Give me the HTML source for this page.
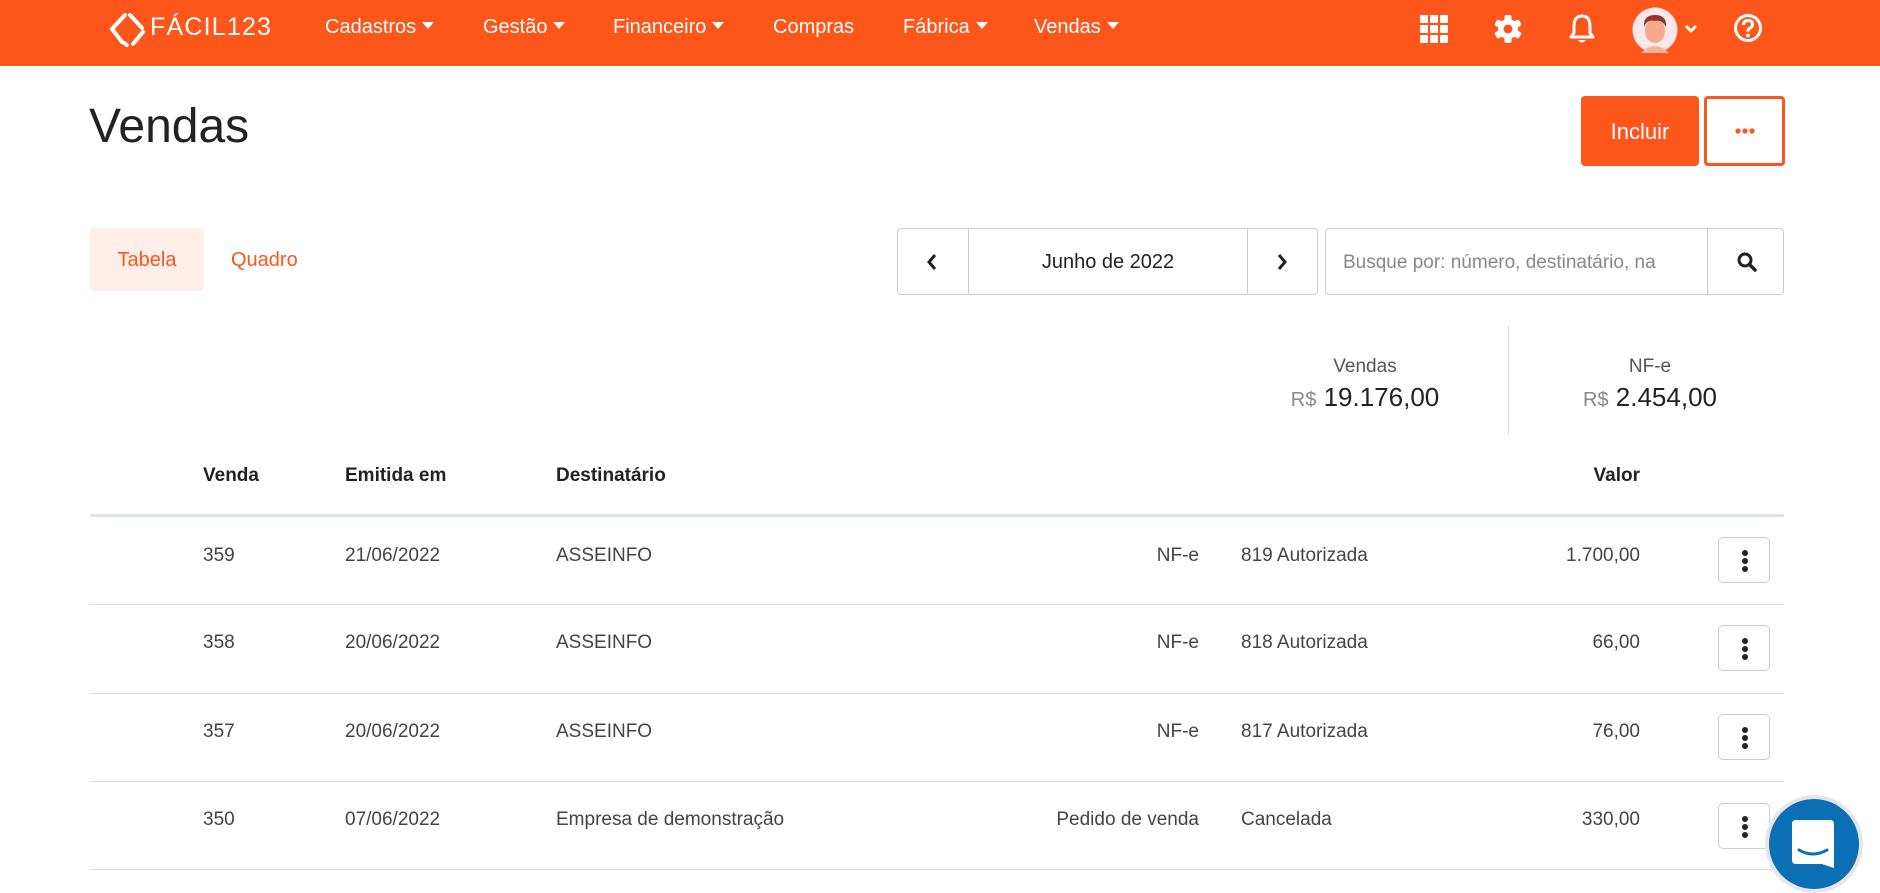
<!DOCTYPE html>
<html><head><meta charset="utf-8"><style>
*{box-sizing:border-box;margin:0;padding:0}
body{width:1880px;height:889px;overflow:hidden;background:#fff;font-family:"Liberation Sans",sans-serif;color:#222;position:relative}
.a{position:absolute;white-space:nowrap}
.nav{position:absolute;left:0;top:0;width:1880px;height:66px;background:#fc561b}
.ni{position:absolute;top:16px;color:#fff;font-size:20px}
.car{display:inline-block;width:0;height:0;border-left:6px solid transparent;border-right:6px solid transparent;border-top:7px solid #fff;margin-left:6px;vertical-align:4px}
.hl{position:absolute;left:90px;width:1694px;height:1px;background:#ddd}
.cell{position:absolute;font-size:19px;color:#444}
.kb{position:absolute;left:1718px;width:52px;height:46px;border:1px solid #ccc;border-radius:5px}
.kb i{position:absolute;left:23px;width:6px;height:6px;border-radius:50%;background:#222}
</style></head><body>
<div class="nav">
 <svg class="a" style="left:108px;top:12px" width="40" height="36" viewBox="0 0 40 36"><g fill="none" stroke="#fff" stroke-width="4" stroke-linecap="round"><path d="M17 3 L4 17 L14 30"/><path d="M22 3 L34 16"/><path d="M35 20 L25 32"/><path d="M19 33 L16 31"/></g></svg>
 <div class="a" style="left:150px;top:13px;color:#fff;font-size:25px;letter-spacing:1.2px">FÁCIL123</div>
 <div class="ni" style="left:325px">Cadastros<span class="car"></span></div>
 <div class="ni" style="left:483px">Gestão<span class="car"></span></div>
 <div class="ni" style="left:613px">Financeiro<span class="car"></span></div>
 <div class="ni" style="left:773px">Compras</div>
 <div class="ni" style="left:903px">Fábrica<span class="car"></span></div>
 <div class="ni" style="left:1034px">Vendas<span class="car"></span></div>
 <svg class="a" style="left:1420px;top:15px" width="30" height="28" viewBox="0 0 30 28" fill="#fff"><rect x="0" y="0" width="8" height="8" rx="1"/><rect x="10" y="0" width="8" height="8" rx="1"/><rect x="20" y="0" width="8" height="8" rx="1"/><rect x="0" y="10" width="8" height="8" rx="1"/><rect x="10" y="10" width="8" height="8" rx="1"/><rect x="20" y="10" width="8" height="8" rx="1"/><rect x="0" y="20" width="8" height="8" rx="1"/><rect x="10" y="20" width="8" height="8" rx="1"/><rect x="20" y="20" width="8" height="8" rx="1"/></svg>
 <svg class="a" style="left:1493px;top:14px" width="30" height="30" viewBox="-15 -15 30 30"><g fill="#fff"><circle r="10"/><rect x="-3.5" y="-14" width="7" height="28" rx="2"/><rect x="-3.5" y="-14" width="7" height="28" rx="2" transform="rotate(60)"/><rect x="-3.5" y="-14" width="7" height="28" rx="2" transform="rotate(120)"/></g><circle r="4.5" fill="#fc561b"/></svg>
 <svg class="a" style="left:1569px;top:13px" width="26" height="32" viewBox="0 0 26 32"><path d="M13 3 C6 3 5 9 5 14 L5 20 L2 24 L24 24 L21 20 L21 14 C21 9 20 3 13 3Z" fill="none" stroke="#fff" stroke-width="3" stroke-linejoin="round"/><path d="M9 27 Q13 32 17 27Z" fill="#fff"/></svg>
 <svg class="a" style="left:1632px;top:7px" width="46" height="46" viewBox="0 0 46 46"><circle cx="23" cy="23" r="22.5" fill="#fbe6ea"/><path d="M9 46 Q23 32 37 46Z" fill="#f3b49a"/><ellipse cx="23" cy="24" rx="10" ry="12" fill="#f5a98a"/><path d="M12 20 Q11 8 23 8 Q35 8 34 20 Q30 12 23 14 Q15 12 12 20Z" fill="#8b3a2b"/></svg>
 <svg class="a" style="left:1684px;top:24px" width="14" height="10" viewBox="0 0 14 10"><path d="M2 2 L7 7 L12 2" fill="none" stroke="#fff" stroke-width="3"/></svg>
 <svg class="a" style="left:1733px;top:13px" width="30" height="30" viewBox="0 0 30 30"><circle cx="15" cy="15" r="12.5" fill="none" stroke="#fff" stroke-width="3"/><path d="M10.5 12 Q10.5 7.5 15 7.5 Q19.5 7.5 19.5 11.5 Q19.5 14 16.5 15.5 Q15 16.3 15 18.5" fill="none" stroke="#fff" stroke-width="3"/><circle cx="15" cy="22.5" r="1.9" fill="#fff"/></svg>
</div>

<div class="a" style="left:89px;top:99px;font-size:48px;color:#222">Vendas</div>
<div class="a" style="left:1581px;top:96px;width:118px;height:70px;background:#fc561b;border-radius:4px;color:#fff;font-size:22px;text-align:center;line-height:72px">Incluir</div>
<div class="a" style="left:1704px;top:96px;width:81px;height:70px;border:3px solid #fc561b;border-radius:4px"><svg class="a" style="left:28px;top:28px" width="20" height="8"><circle cx="3" cy="4" r="2.6" fill="#fc561b"/><circle cx="10" cy="4" r="2.6" fill="#fc561b"/><circle cx="17" cy="4" r="2.6" fill="#fc561b"/></svg></div>

<div class="a" style="left:90px;top:228px;width:114px;height:63px;background:#fdeee9;border-radius:4px;color:#fc561b;font-size:20px;text-align:center;line-height:65px">Tabela</div>
<div class="a" style="left:231px;top:249px;color:#fc561b;font-size:20px">Quadro</div>

<div class="a" style="left:897px;top:228px;width:421px;height:67px;border:1px solid #ccc;border-radius:4px">
 <div class="a" style="left:70px;top:0;width:1px;height:65px;background:#ccc"></div>
 <div class="a" style="left:349px;top:0;width:1px;height:65px;background:#ccc"></div>
 <svg class="a" style="left:28px;top:24px" width="12" height="18"><path d="M9 2 L3 9 L9 16" fill="none" stroke="#222" stroke-width="3"/></svg>
 <svg class="a" style="left:378px;top:24px" width="12" height="18"><path d="M3 2 L9 9 L3 16" fill="none" stroke="#222" stroke-width="3"/></svg>
 <div class="a" style="left:70px;width:280px;top:22px;text-align:center;font-size:20px;color:#222">Junho de 2022</div>
</div>
<div class="a" style="left:1325px;top:228px;width:459px;height:67px;border:1px solid #ccc;border-radius:4px;overflow:hidden">
 <div class="a" style="left:17px;top:23px;font-size:19px;color:#888;width:350px;overflow:hidden">Busque por: número, destinatário, na</div>
 <div class="a" style="left:381px;top:0;width:1px;height:65px;background:#ccc"></div>
 <svg class="a" style="left:410px;top:22px" width="22" height="22"><circle cx="9" cy="9" r="6" fill="none" stroke="#222" stroke-width="3"/><path d="M13.5 13.5 L19 19" stroke="#222" stroke-width="3.5" stroke-linecap="round"/></svg>
</div>

<div class="a" style="left:1265px;width:200px;top:356px;text-align:center;font-size:19px;color:#555">Vendas</div>
<div class="a" style="left:1265px;width:200px;top:382px;text-align:center;font-size:26px;color:#222"><span style="font-size:20px;color:#888">R$</span> 19.176,00</div>
<div class="a" style="left:1508px;top:326px;width:1px;height:109px;background:#ddd"></div>
<div class="a" style="left:1550px;width:200px;top:356px;text-align:center;font-size:19px;color:#555">NF-e</div>
<div class="a" style="left:1550px;width:200px;top:382px;text-align:center;font-size:26px;color:#222"><span style="font-size:20px;color:#888">R$</span> 2.454,00</div>

<div class="a" style="left:203px;top:465px;font-size:19px;font-weight:bold;color:#222">Venda</div>
<div class="a" style="left:345px;top:465px;font-size:19px;font-weight:bold;color:#222">Emitida em</div>
<div class="a" style="left:556px;top:465px;font-size:19px;font-weight:bold;color:#222">Destinatário</div>
<div class="a" style="left:1540px;width:100px;text-align:right;top:465px;font-size:19px;font-weight:bold;color:#222">Valor</div>
<div class="a" style="left:90px;top:514px;width:1694px;height:3px;background:#dfe3ea"></div>

<div class="hl" style="top:604px"></div><div class="hl" style="top:693px"></div><div class="hl" style="top:781px"></div><div class="hl" style="top:869px"></div>

<div class="cell" style="left:203px;top:545px">359</div><div class="cell" style="left:345px;top:545px">21/06/2022</div><div class="cell" style="left:556px;top:545px">ASSEINFO</div><div class="cell" style="left:999px;width:200px;text-align:right;top:545px">NF-e</div><div class="cell" style="left:1241px;top:545px">819 Autorizada</div><div class="cell" style="left:1440px;width:200px;text-align:right;top:545px">1.700,00</div>
<div class="kb" style="top:537px"><i style="top:12px"></i><i style="top:20px"></i><i style="top:28px"></i></div>

<div class="cell" style="left:203px;top:632px">358</div><div class="cell" style="left:345px;top:632px">20/06/2022</div><div class="cell" style="left:556px;top:632px">ASSEINFO</div><div class="cell" style="left:999px;width:200px;text-align:right;top:632px">NF-e</div><div class="cell" style="left:1241px;top:632px">818 Autorizada</div><div class="cell" style="left:1440px;width:200px;text-align:right;top:632px">66,00</div>
<div class="kb" style="top:625px"><i style="top:12px"></i><i style="top:20px"></i><i style="top:28px"></i></div>

<div class="cell" style="left:203px;top:721px">357</div><div class="cell" style="left:345px;top:721px">20/06/2022</div><div class="cell" style="left:556px;top:721px">ASSEINFO</div><div class="cell" style="left:999px;width:200px;text-align:right;top:721px">NF-e</div><div class="cell" style="left:1241px;top:721px">817 Autorizada</div><div class="cell" style="left:1440px;width:200px;text-align:right;top:721px">76,00</div>
<div class="kb" style="top:714px"><i style="top:12px"></i><i style="top:20px"></i><i style="top:28px"></i></div>

<div class="cell" style="left:203px;top:809px">350</div><div class="cell" style="left:345px;top:809px">07/06/2022</div><div class="cell" style="left:556px;top:809px">Empresa de demonstração</div><div class="cell" style="left:999px;width:200px;text-align:right;top:809px">Pedido de venda</div><div class="cell" style="left:1241px;top:809px">Cancelada</div><div class="cell" style="left:1440px;width:200px;text-align:right;top:809px">330,00</div>
<div class="kb" style="top:803px"><i style="top:12px"></i><i style="top:20px"></i><i style="top:28px"></i></div>

<div class="a" style="left:1765px;top:795px;width:98px;height:98px;border-radius:50%;background:#e6e6e6"></div>
<div class="a" style="left:1769px;top:799px;width:90px;height:90px;border-radius:50%;background:#0b6fb5"></div>
<svg class="a" style="left:1792px;top:820px" width="44" height="50" viewBox="0 0 44 50"><path d="M4 0 H38 Q42 0 42 4 V48 L30 44 H4 Q0 44 0 40 V4 Q0 0 4 0Z" fill="#fff"/><path d="M7 30 Q21 38 35 30" fill="none" stroke="#0b6fb5" stroke-width="3" stroke-linecap="round"/></svg>
</body></html>
